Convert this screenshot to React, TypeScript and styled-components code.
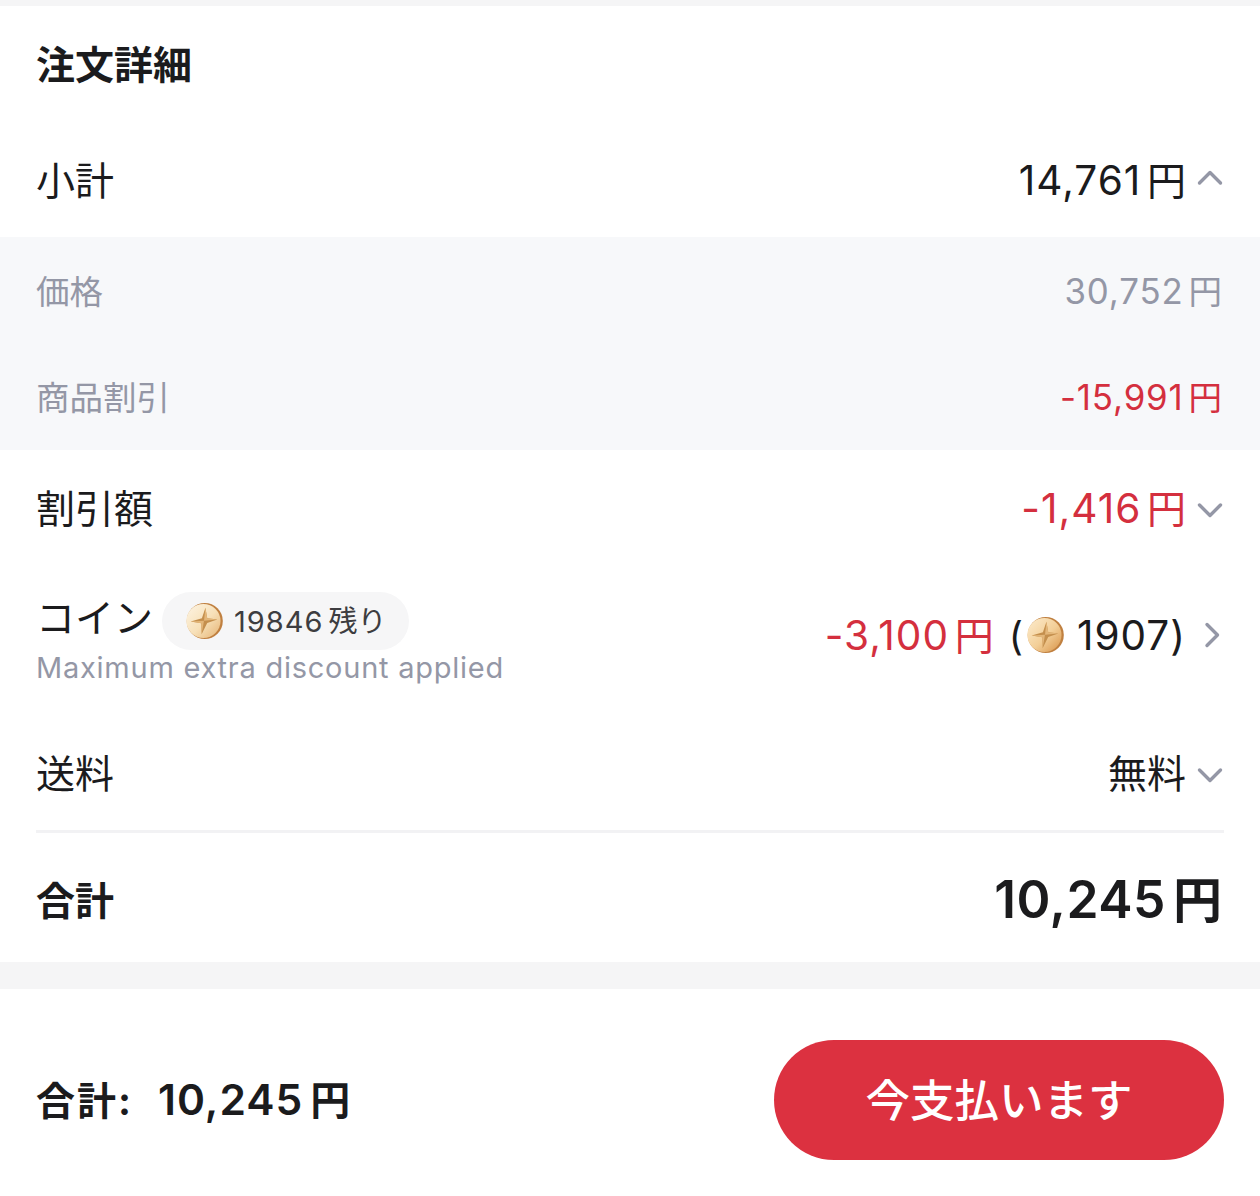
import React from 'react';
import styled, { createGlobalStyle } from 'styled-components';

const GlobalStyle = createGlobalStyle`
  html, body {
    margin: 0;
    padding: 0;
    background: #f5f5f6;
  }
  body {
    font-family: Inter, "Noto Sans CJK JP", sans-serif;
    color: #1b1b1d;
  }
`;

const Page = styled.div`
  width: 1260px;
  height: 1196px;
  display: flex;
  flex-direction: column;
  padding-top: 6px;
  box-sizing: border-box;
  overflow: hidden;
`;

const Details = styled.section`
  height: 956px;
  background: #fff;
  display: flex;
  flex-direction: column;
`;

const Title = styled.h2`
  margin: 0;
  height: 112px;
  flex-shrink: 0;
  padding: 0 36px;
  display: flex;
  align-items: center;
  font-size: 39px;
  font-weight: 700;
`;

const Row = styled.div<{ $height: number; $nudge?: number }>`
  height: ${(p) => p.$height}px;
  flex-shrink: 0;
  box-sizing: border-box;
  padding: ${(p) => p.$nudge ?? 0}px 36px 0;
  display: flex;
  align-items: center;
  justify-content: space-between;
  font-size: 39px;
`;

const SubRows = styled.div`
  height: 213px;
  flex-shrink: 0;
  background: #f7f8fa;
  color: #9497a6;
  display: flex;
  flex-direction: column;
  font-size: 33.5px;
`;

const SubRow = styled.div`
  flex: 1;
  padding: 0 38px 2px 36px;
  display: flex;
  align-items: center;
  justify-content: space-between;
`;

const Value = styled.div<{ $red?: boolean }>`
  display: flex;
  align-items: center;
  color: ${(p) => (p.$red ? '#d42f3e' : 'inherit')};
`;

const Num = styled.span`
  font-size: 1.04em;
  letter-spacing: 0.025em;
  margin-right: 0.14em;
`;

const Arrow = styled.svg<{ $drop?: boolean }>`
  width: 28px;
  height: 28px;
  margin-left: 10px;
  margin-top: ${(p) => (p.$drop ? 8 : 0)}px;
  fill: none;
  stroke: #9497a6;
  stroke-width: 3.4;
  stroke-linecap: round;
  stroke-linejoin: round;
`;

const CoinLabel = styled.div`
  display: flex;
  flex-direction: column;
  margin-top: 7px;
`;

const CoinTop = styled.div`
  display: flex;
  align-items: center;
  gap: 9px;
  height: 58px;
`;

const CoinTitle = styled.span`
  margin-bottom: 12px;
`;

const Pill = styled.div`
  height: 58px;
  padding: 0 23px;
  border-radius: 29px;
  background: #f6f6f7;
  color: #3d3d40;
  font-size: 29px;
  display: flex;
  align-items: center;
  gap: 11px;
`;

const PillText = styled.span`
  margin-bottom: 3px;
`;

const PillCount = styled.span`
  letter-spacing: 1px;
  margin-right: 5px;
`;

const Hint = styled.div`
  font-size: 29px;
  line-height: 36px;
  color: #9497a6;
  letter-spacing: 0.75px;
`;

const CoinValue = styled.div`
  display: flex;
  align-items: center;
`;

const CoinPrice = styled(Value)`
  margin-bottom: 4px;
`;

const Paren = styled.span`
  margin-left: 15px;
  margin-right: 3px;
`;

const CoinAmount = styled.span`
  margin-left: 13px;
  font-size: 40.5px;
  letter-spacing: 1px;
`;

const Divider = styled.div`
  height: 3px;
  margin: 0 36px;
  background: #f2f2f4;
  flex-shrink: 0;
`;

const TotalRow = styled(Row)`
  font-weight: 700;
`;

const TotalValue = styled.div`
  font-size: 49px;
  font-weight: 600;
  padding-right: 2px;
  margin-bottom: 2px;
`;

const TotalNum = styled.span`
  font-size: 51.5px;
  letter-spacing: 0.5px;
  margin-right: 7px;
`;

const Footer = styled.footer`
  margin-top: 27px;
  flex: 1;
  background: #fff;
  padding: 51px 36px 36px;
  display: flex;
  align-items: center;
  justify-content: space-between;
`;

const FooterTotal = styled.div`
  font-size: 40px;
  font-weight: 600;
  margin-bottom: 4px;
`;

const FooterLabel = styled.span`
  font-size: 39px;
  font-weight: 700;
  margin-right: 25px;
  letter-spacing: 2px;
`;

const FooterNum = styled.span`
  font-size: 42.5px;
  letter-spacing: 1px;
  margin-right: 7px;
`;

const PayButton = styled.button`
  width: 450px;
  height: 120px;
  border: none;
  border-radius: 60px;
  background: #dc3140;
  color: #fff;
  font-family: inherit;
  font-size: 44.5px;
  font-weight: 500;
  padding: 0 0 6px;
`;

// coin drawing: rim, face and a faceted four-point star
const Coin = ({ pale }: { pale?: boolean }) => {
  const id = pale ? 'coinFacePale' : 'coinFace';
  return (
    <svg width={38} height={38} viewBox="0 0 40 40">
      <defs>
        <linearGradient id={id} x1="0.1" y1="0.1" x2="0.9" y2="0.9">
          <stop offset="0" stopColor={pale ? '#fcf1dc' : '#fbe7c4'} />
          <stop offset="0.55" stopColor={pale ? '#f7e0b8' : '#f3cf98'} />
          <stop offset="1" stopColor={pale ? '#e9bd82' : '#dd9f58'} />
        </linearGradient>
      </defs>
      <circle cx="20.8" cy="20" r="19" fill="#c08040" />
      <circle cx="19.4" cy="20" r="18" fill={`url(#${id})`} />
      <path d="M21.5 6 L23.4 17 L34 18.4 L23.4 22 L17.5 34 L17.2 22.4 L6 20.6 L17.8 17 Z" fill="#c48f4d" />
      <path d="M21.5 6 L23.4 17 L34 18.4 L20 19.8 Z M17.5 34 L17.2 22.4 L6 20.6 L20 19.8 Z" fill="#e3b679" />
    </svg>
  );
};

const ChevronUp = () => (
  <Arrow viewBox="0 0 28 28"><path d="M3.5 19 L14 8.5 L24.5 19" /></Arrow>
);

const ChevronDown = () => (
  <Arrow $drop viewBox="0 0 28 28"><path d="M3.5 9 L14 19.5 L24.5 9" /></Arrow>
);

const ChevronRight = () => (
  <Arrow viewBox="0 0 28 28"><path d="M11 3.5 L21.5 14 L11 24.5" /></Arrow>
);

export default function App() {
  return (
    <Page>
      <GlobalStyle />
      <Details>
        <Title>注文詳細</Title>
        <Row $height={119}>
          <span>小計</span>
          <Value><span><Num>14,761</Num>円</span><ChevronUp /></Value>
        </Row>
        <SubRows>
          <SubRow>
            <span>価格</span>
            <span><Num>30,752</Num>円</span>
          </SubRow>
          <SubRow>
            <span>商品割引</span>
            <Value $red><span><Num>-15,991</Num>円</span></Value>
          </SubRow>
        </SubRows>
        <Row $height={112}>
          <span>割引額</span>
          <Value $red><span><Num>-1,416</Num>円</span><ChevronDown /></Value>
        </Row>
        <Row $height={146}>
          <CoinLabel>
            <CoinTop>
              <CoinTitle>コイン</CoinTitle>
              <Pill><Coin pale /><PillText><PillCount>19846</PillCount>残り</PillText></Pill>
            </CoinTop>
            <Hint>Maximum extra discount applied</Hint>
          </CoinLabel>
          <CoinValue>
            <CoinPrice $red><span><Num>-3,100</Num>円</span></CoinPrice>
            <Paren>(</Paren>
            <Coin />
            <CoinAmount>1907)</CoinAmount>
            <ChevronRight />
          </CoinValue>
        </Row>
        <Row $height={122} $nudge={4}>
          <span>送料</span>
          <Value><span>無料</span><ChevronDown /></Value>
        </Row>
        <Divider />
        <TotalRow $height={129}>
          <span>合計</span>
          <TotalValue><TotalNum>10,245</TotalNum>円</TotalValue>
        </TotalRow>
      </Details>
      <Footer>
        <FooterTotal>
          <FooterLabel>合計:</FooterLabel>
          <FooterNum>10,245</FooterNum>円
        </FooterTotal>
        <PayButton>今支払います</PayButton>
      </Footer>
    </Page>
  );
}
